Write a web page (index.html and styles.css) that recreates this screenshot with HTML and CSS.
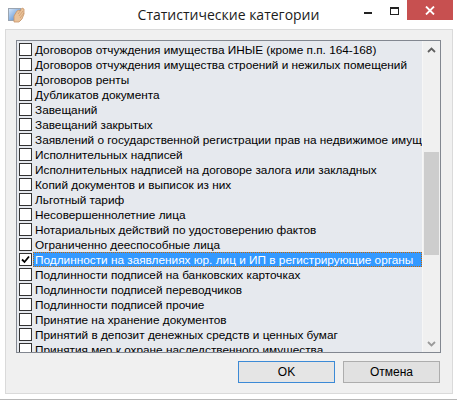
FILE: index.html
```html
<!DOCTYPE html>
<html lang="ru">
<head>
    <meta charset="UTF-8">
    <title>Статистические категории</title>
    <link rel="stylesheet" href="styles.css">
</head>
<body>
    <!-- Dialog Window -->
    <div class="window">
        <div class="titlebar">
            <div class="title-left">
                <svg class="app-icon" width="17" height="16" viewBox="0 0 17 16">
                    <defs>
                        <linearGradient id="card" x1="0" y1="0" x2="1" y2="1">
                            <stop offset="0" stop-color="#dbe9f8"/>
                            <stop offset="1" stop-color="#3d7fd0"/>
                        </linearGradient>
                    </defs>
                    <rect x="0.5" y="1.5" width="12" height="12" fill="url(#card)" stroke="#9aa4b0"/>
                    <path d="M6 15 L6 9 L9 4 L11 3 L12 4 L14 1 L16 2 L16 7 L14 12 L11 15 Z" fill="#e9c29a" stroke="#c8966a" stroke-width="0.8"/>
                    <path d="M10 7 L13 3 M11 9 L15 4 M12 11 L16 6" stroke="#c8966a" stroke-width="0.7"/>
                </svg>
            </div>
            <div class="title">Статистические категории</div>
            <div class="controls">
                <span class="ctl ctl-min"><span class="min-bar"></span></span>
                <span class="ctl ctl-max"><span class="max-box"></span></span>
                <span class="ctl ctl-close">
                    <svg width="10" height="9" viewBox="0 0 10 9">
                        <path d="M1 0.5 L9 8.5 M9 0.5 L1 8.5" stroke="#fff" stroke-width="1.8"/>
                    </svg>
                </span>
            </div>
        </div>

        <div class="client">
            <!-- Check List -->
            <div class="listbox">
                <div class="items">
                    <div class="item"><span class="check"></span><span class="label">Договоров отчуждения имущества ИНЫЕ (кроме п.п. 164-168)</span></div>
                    <div class="item"><span class="check"></span><span class="label">Договоров отчуждения имущества строений и нежилых помещений</span></div>
                    <div class="item"><span class="check"></span><span class="label">Договоров ренты</span></div>
                    <div class="item"><span class="check"></span><span class="label">Дубликатов документа</span></div>
                    <div class="item"><span class="check"></span><span class="label">Завещаний</span></div>
                    <div class="item"><span class="check"></span><span class="label">Завещаний закрытых</span></div>
                    <div class="item"><span class="check"></span><span class="label">Заявлений о государственной регистрации прав на недвижимое имущество</span></div>
                    <div class="item"><span class="check"></span><span class="label">Исполнительных надписей</span></div>
                    <div class="item"><span class="check"></span><span class="label">Исполнительных надписей на договоре залога или закладных</span></div>
                    <div class="item"><span class="check"></span><span class="label">Копий документов и выписок из них</span></div>
                    <div class="item"><span class="check"></span><span class="label">Льготный тариф</span></div>
                    <div class="item"><span class="check"></span><span class="label">Несовершеннолетние лица</span></div>
                    <div class="item"><span class="check"></span><span class="label">Нотариальных действий по удостоверению фактов</span></div>
                    <div class="item"><span class="check"></span><span class="label">Ограниченно дееспособные лица</span></div>
                    <div class="item selected"><span class="check checked">
                        <svg width="11" height="11" viewBox="0 0 11 11"><path d="M2 5.5 L4.5 8 L9 2.5" fill="none" stroke="#000" stroke-width="1.8"/></svg>
                    </span><span class="label">Подлинности на заявлениях юр. лиц и ИП в регистрирующие органы</span></div>
                    <div class="item"><span class="check"></span><span class="label">Подлинности подписей на банковских карточках</span></div>
                    <div class="item"><span class="check"></span><span class="label">Подлинности подписей переводчиков</span></div>
                    <div class="item"><span class="check"></span><span class="label">Подлинности подписей прочие</span></div>
                    <div class="item"><span class="check"></span><span class="label">Принятие на хранение документов</span></div>
                    <div class="item"><span class="check"></span><span class="label">Принятий в депозит денежных средств и ценных бумаг</span></div>
                    <div class="item"><span class="check"></span><span class="label">Принятия мер к охране наследственного имущества</span></div>
                </div>
                <div class="scrollbar">
                    <div class="sb-arrow">
                        <svg width="9" height="6" viewBox="0 0 9 6"><path d="M1 5 L4.5 1.5 L8 5" fill="none" stroke="#606060" stroke-width="1.8"/></svg>
                    </div>
                    <div class="sb-track"><div class="sb-thumb"></div></div>
                    <div class="sb-arrow">
                        <svg width="9" height="6" viewBox="0 0 9 6"><path d="M1 1 L4.5 4.5 L8 1" fill="none" stroke="#9a9a9a" stroke-width="1.8"/></svg>
                    </div>
                </div>
            </div>

            <!-- Buttons -->
            <div class="buttons">
                <button class="btn btn-default">OK</button>
                <button class="btn">Отмена</button>
            </div>
        </div>
    </div>

    <!-- Window underneath -->
    <div class="behind">Подлинность подписи на заявлении юридического лица о регистрации</div>
</body>
</html>
```

FILE: styles.css
```css
/* Basic Styling */
body {
    margin: 0;
    width: 457px;
    height: 403px;
    overflow: hidden;
    background-color: white;
    font-family: "Liberation Sans", Arial, sans-serif;
    color: black;
}

.window {
    height: 399px;
    background-color: white;
}

/* Title bar */
.titlebar {
    display: grid;
    grid-template-columns: 1fr auto 1fr;
    height: 29px;
}

.title-left {
    padding: 7px 0 0 8px;
}

.title {
    font-family: "Open Sans", sans-serif;
    font-size: 14px;
    line-height: 29px;
    color: #1b1b1b;
}

.controls {
    display: flex;
    justify-content: flex-end;
    align-items: flex-start;
    padding-right: 4px;
}

.ctl {
    display: flex;
    justify-content: center;
    height: 20px;
}

.ctl-min {
    width: 26px;
}

.min-bar {
    width: 8px;
    height: 2px;
    margin-top: 12px;
    background-color: #222;
}

.ctl-max {
    width: 26px;
}

.max-box {
    width: 7px;
    height: 5px;
    margin-top: 7px;
    border: 1px solid #222;
    border-top-width: 2px;
}

.ctl-close {
    width: 46px;
    align-items: center;
    background-color: #c75050;
}

/* Client area */
.client {
    width: 448px;
    height: 365px;
    box-sizing: border-box;
    margin-left: 5px;
    padding: 10px 10px 0 10px;
    background-color: #f0f0f0;
    border: 1px solid #dadada;
}

.listbox {
    display: flex;
    width: 425px;
    height: 313px;
    box-sizing: border-box;
    border: 1px solid #828790;
    background-color: #e6e9ee;
    overflow: hidden;
}

.items {
    flex: 1;
    min-width: 0;
    padding-top: 1px;
    overflow: hidden;
}

.item {
    display: flex;
    align-items: center;
    height: 15px;
    padding-left: 2px;
    font-size: 11.8px;
    white-space: nowrap;
}

.check {
    flex: none;
    display: flex;
    align-items: center;
    justify-content: center;
    width: 13px;
    height: 13px;
    box-sizing: border-box;
    border: 1px solid #333;
    background-color: white;
}

.label {
    flex: 1;
    height: 15px;
    line-height: 16px;
    margin-left: 1px;
    padding: 0 2px;
    box-sizing: border-box;
    overflow: hidden;
}

.selected .label {
    background-color: #3399ff;
    color: white;
    border: 1px dotted #cc6600;
    line-height: 14px;
    padding: 0 1px;
}

/* Scroll bar */
.scrollbar {
    flex: none;
    display: flex;
    flex-direction: column;
    width: 17px;
    background-color: #f0f0f0;
    border-left: 1px solid #f6f6f6;
}

.sb-arrow {
    display: flex;
    align-items: center;
    justify-content: center;
    height: 17px;
}

.sb-track {
    flex: 1;
    padding: 94px 1px 0 1px;
}

.sb-thumb {
    height: 103px;
    background-color: #cdcdcd;
}

/* Buttons */
.buttons {
    display: flex;
    justify-content: flex-end;
    gap: 8px;
    width: 425px;
    margin-top: 8px;
    padding-right: 1px;
    box-sizing: border-box;
}

.btn {
    width: 97px;
    height: 22px;
    padding: 0;
    font-family: "Liberation Sans", Arial, sans-serif;
    font-size: 12px;
    color: black;
    background-color: #e1e1e1;
    border: 1px solid #adadad;
}

.btn-default {
    border-color: #3c8ad6;
    background-color: #e5e5e5;
}

.behind {
    padding: 1px 0 0 57px;
    border-top: 1px solid #b8b8b8;
    font-size: 12px;
    line-height: 14px;
    color: #222;
    white-space: nowrap;
}
```
